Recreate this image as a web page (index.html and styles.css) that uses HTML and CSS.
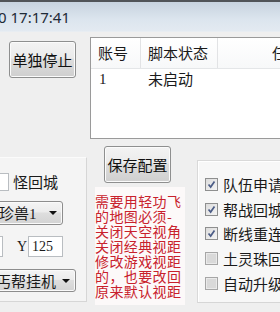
FILE: index.html
```html
<!DOCTYPE html>
<html>
<head>
<meta charset="utf-8">
<link rel="stylesheet" href="styles.css">
</head>
<body>
<div class="win">
  <div class="titlebar"><span class="title">0 17:17:41</span></div>
  <div class="top">
    <button class="btn stop">单独停止</button>
    <div class="list">
      <div class="lhead">
        <div class="col c1">账号</div>
        <div class="col c2">脚本状态</div>
        <div class="col c3">任务</div>
      </div>
      <div class="litem">
        <div class="col c1 num">1</div>
        <div class="col c2">未启动</div>
      </div>
    </div>
  </div>
  <div class="bottom">
    <div class="lpanel">
      <div class="prow r1"><span class="edit e1"></span><span class="lbl">怪回城</span></div>
      <div class="combo ca"><span class="ctext">珍兽<span class="num">1</span></span><i class="arr"></i></div>
      <div class="prow r3"><span class="edit e2"></span><span class="ylbl num">Y</span><span class="edit e3 num">125</span></div>
      <div class="combo cb"><span class="ctext">丐帮挂机</span><i class="arr"></i></div>
    </div>
    <div class="mid">
      <button class="btn save">保存配置</button>
      <div class="note">需要用轻功飞<br>的地图必须-<br>关闭天空视角<br>关闭经典视距<br>修改游戏视距<br>的，也要改回<br>原来默认视距</div>
    </div>
    <div class="rpanel">
      <div class="chk"><span class="box on"><svg viewBox="0 0 13 13"><path d="M3 6.5 L5.5 9.5 L10 3" fill="none" stroke="#4b5c86" stroke-width="2"/></svg></span><span>队伍申请</span></div>
      <div class="chk"><span class="box on"><svg viewBox="0 0 13 13"><path d="M3 6.5 L5.5 9.5 L10 3" fill="none" stroke="#4b5c86" stroke-width="2"/></svg></span><span>帮战回城</span></div>
      <div class="chk"><span class="box on"><svg viewBox="0 0 13 13"><path d="M3 6.5 L5.5 9.5 L10 3" fill="none" stroke="#4b5c86" stroke-width="2"/></svg></span><span>断线重连</span></div>
      <div class="chk"><span class="box off"></span><span>土灵珠回</span></div>
      <div class="chk"><span class="box off"></span><span>自动升级</span></div>
    </div>
  </div>
</div>
</body>
</html>
```

FILE: styles.css
```css
html, body {
  margin: 0;
  padding: 0;
}
body {
  width: 280px;
  height: 312px;
  overflow: hidden;
  background: #f0f0f0;
  font-family: "Noto Sans CJK SC", "Noto Sans", sans-serif;
  font-size: 15px;
  color: #1a1a1a;
}
.win {
  width: 280px;
  height: 312px;
  overflow: hidden;
  background: #efefef;
}
.titlebar {
  height: 29px;
  border-top: 2px solid #505458;
  background: linear-gradient(#c7d3df, #dce5ee 60%, #e3eaf1);
  border-bottom: 1px solid #e8edf2;
  overflow: hidden;
}
.title {
  display: block;
  margin-left: -2px;
  padding-top: 5px;
  font-family: "Noto Sans", sans-serif;
  font-size: 15px;
  line-height: 20px;
  color: #1e2a36;
  white-space: nowrap;
}
.num {
  font-family: "Liberation Serif", serif;
}
.top {
  display: flex;
  align-items: flex-start;
  padding-top: 5px;
  height: 102px;
}
.btn {
  flex: none;
  font-family: "Noto Sans CJK SC", sans-serif;
  font-size: 15px;
  color: #111;
  border: 1px solid #8e8f8f;
  border-radius: 3px;
  background: linear-gradient(#f3f3f3, #ebebeb 45%, #dddddd 50%, #cfcfcf);
  box-shadow: inset 0 0 0 1px #fbfbfb;
  padding: 0;
  line-height: 20px;
  white-space: nowrap;
}
.stop {
  width: 67px;
  height: 37px;
  margin-top: 4px;
  margin-left: 9px;
}
.list {
  margin-left: 14px;
  width: 250px;
  height: 100px;
  flex: none;
  border: 1px solid #9a9a9a;
  background: #fff;
}
.lhead {
  display: flex;
  height: 30px;
  background: linear-gradient(#ffffff, #f7f8f9);
  border-bottom: 1px solid #e4e6e8;
}
.col {
  line-height: 30px;
  padding-left: 7px;
  box-sizing: border-box;
  white-space: nowrap;
}
.lhead .col {
  border-right: 1px solid #e2e3e5;
}
.c1 { width: 50px; flex: none; }
.c2 { width: 77px; flex: none; }
.c3 { flex: 1; padding-left: 54px; }
.litem {
  display: flex;
  height: 22px;
}
.litem .col { line-height: 20px; }
.litem .num { font-size: 15px; padding-left: 8px; }
.bottom {
  display: flex;
  align-items: flex-start;
}
.lpanel {
  width: 87px;
  height: 145px;
  margin-top: 18px;
  flex: none;
  box-sizing: border-box;
  background: #f4f4f4;
  border-top: 1px solid #fbfbfb;
  border-right: 1px solid #d6d6d6;
  border-bottom: 1px solid #d6d6d6;
  overflow: hidden;
  position: relative;
}
.prow {
  display: flex;
  align-items: center;
}
.edit {
  display: block;
  box-sizing: border-box;
  background: #fff;
  border: 1px solid #b9bdc1;
  flex: none;
}
.r1 {
  margin-top: 15px;
  height: 18px;
}
.e1 {
  width: 30px;
  height: 18px;
  margin-left: -21px;
}
.lbl {
  margin-left: 4px;
  line-height: 18px;
  white-space: nowrap;
}
.combo {
  display: flex;
  align-items: center;
  box-sizing: border-box;
  border: 1px solid #8d8d8d;
  border-radius: 3px;
  background: linear-gradient(#f4f4f4, #ececec 45%, #dedede 50%, #d3d3d3);
  box-shadow: inset 0 0 0 1px #fafafa;
  position: relative;
}
.ca {
  margin-top: 10px;
  height: 24px;
  width: 83px;
  margin-left: -20px;
}
.ca .ctext { margin-left: 18px; }
.cb {
  margin-top: 12px;
  height: 23px;
  width: 96px;
  margin-left: -20px;
}
.cb .ctext { margin-left: 15px; }
.ctext {
  line-height: 20px;
  white-space: nowrap;
}
.arr {
  position: absolute;
  right: 5px;
  top: 50%;
  margin-top: -2px;
  width: 0;
  height: 0;
  border-left: 4px solid transparent;
  border-right: 4px solid transparent;
  border-top: 4px solid #111;
}
.r3 {
  margin-top: 11px;
  height: 21px;
}
.e2 {
  width: 20px;
  height: 21px;
  margin-left: -17px;
}
.ylbl {
  margin-left: 14px;
  width: 11px;
  font-size: 14px;
}
.e3 {
  width: 35px;
  height: 21px;
  font-size: 14px;
  line-height: 19px;
  padding-left: 3px;
}
.mid {
  width: 110px;
  flex: none;
  display: flex;
  flex-direction: column;
}
.save {
  width: 67px;
  height: 37px;
  margin-top: 7px;
  margin-left: 17px;
}
.note {
  margin-top: 4px;
  margin-left: 8px;
  width: 90px;
  height: 118px;
  padding-top: 7px;
  box-sizing: border-box;
  background: #fcf9f9;
  color: #c8212c;
  font-size: 14px;
  line-height: 15px;
  white-space: nowrap;
  letter-spacing: 0.4px;
}
.rpanel {
  width: 90px;
  height: 143px;
  margin-top: 21px;
  flex: none;
  box-sizing: border-box;
  background: #f7f7f7;
  border-top: 1px solid #d9d9d9;
  border-left: 1px solid #d9d9d9;
  box-shadow: inset 1px 1px 0 #ffffff;
  border-bottom: 1px solid #d6d6d6;
  padding-top: 11px;
  padding-left: 7px;
  overflow: hidden;
}
.chk {
  display: flex;
  align-items: center;
  height: 24.7px;
  white-space: nowrap;
}
.box {
  width: 13px;
  height: 13px;
  box-sizing: border-box;
  border: 1px solid #8e8f8f;
  margin-right: 5px;
  flex: none;
  display: block;
}
.box svg {
  display: block;
  width: 11px;
  height: 11px;
}
.box.on {
  background: linear-gradient(135deg, #dcdcdc, #f4f4f4);
}
.box.off {
  background: #d9d9d9;
  box-shadow: inset 0 0 0 1px #eaeaea;
  border-color: #a6a6a6;
}
```
